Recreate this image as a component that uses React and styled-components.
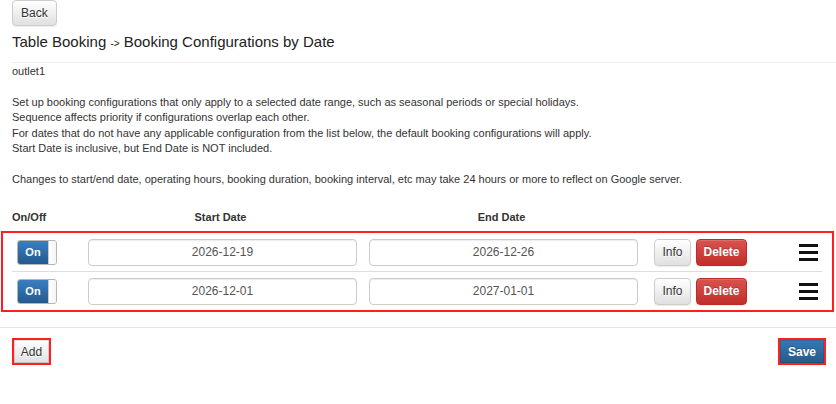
import React from 'react';
import styled, { createGlobalStyle, css } from 'styled-components';

const GlobalStyle = createGlobalStyle`
  body {
    margin: 0;
    background: #fff;
    color: #333;
    font-family: "Liberation Sans", Arial, sans-serif;
    font-size: 11px;
  }
`;

const rows = [
  { id: 1, start: '2026-12-19', end: '2026-12-26' },
  { id: 2, start: '2026-12-01', end: '2027-01-01' },
];

const App = () => (
  <Page>
    <GlobalStyle />
    <Button>Back</Button>
    <Title>
      Table Booking <Arrow>-&gt;</Arrow> Booking Configurations by Date
    </Title>
    <TopRule />
    <Intro>
      outlet1
      <br />
      <br />
      Set up booking configurations that only apply to a selected date range, such as seasonal periods or special holidays.
      <br />
      Sequence affects priority if configurations overlap each other.
      <br />
      For dates that do not have any applicable configuration from the list below, the default booking configurations will apply.
      <br />
      Start Date is inclusive, but End Date is NOT included.
      <br />
      <br />
      Changes to start/end date, operating hours, booking duration, booking interval, etc may take 24 hours or more to reflect on Google server.
    </Intro>

    <HeaderRow>
      <HeadCell>On/Off</HeadCell>
      <HeadCell $center>Start Date</HeadCell>
      <HeadCell $center>End Date</HeadCell>
    </HeaderRow>

    <RowsBox>
      {rows.map(row => (
        <Row key={row.id}>
          <Switch>
            <SwitchOn>On</SwitchOn>
            <SwitchKnob />
          </Switch>
          <DateInput readOnly value={row.start} />
          <DateInput readOnly value={row.end} $gap={12} />
          <RowActions>
            <Button $size="row" $width={37}>Info</Button>
            <Button $variant="danger" $size="row" $width={51}>Delete</Button>
          </RowActions>
          <Handle viewBox="0 0 19 17" aria-hidden="true">
            <rect x="0" y="0" width="19" height="3" />
            <rect x="0" y="7" width="19" height="3" />
            <rect x="0" y="14" width="19" height="3" />
          </Handle>
        </Row>
      ))}
    </RowsBox>

    <BottomRule />
    <Footer>
      <Button $flagged $width={39}>Add</Button>
      <Button $variant="primary" $flagged $width={48}>Save</Button>
    </Footer>
  </Page>
);

export default App;

const Page = styled.div`
  padding: 0 10px 0 12px;
`;

const variants = {
  default: css`
    color: #333;
    background: linear-gradient(to bottom, #fff 0, #e0e0e0 100%);
    border-color: #ccc;
    text-shadow: 0 1px 0 #fff;
  `,
  primary: css`
    color: #fff;
    font-weight: bold;
    background: linear-gradient(to bottom, #337ab7 0, #265a88 100%);
    border-color: #245580;
    text-shadow: 0 -1px 0 rgba(0, 0, 0, 0.2);
  `,
  danger: css`
    color: #fff;
    font-weight: bold;
    background: linear-gradient(to bottom, #d9534f 0, #c12e2a 100%);
    border-color: #b92c28;
    text-shadow: 0 -1px 0 rgba(0, 0, 0, 0.2);
  `,
};

const Button = styled.button`
  box-sizing: border-box;
  height: ${({ $size }) => ($size === 'row' ? '27px' : '26px')};
  ${({ $width }) => ($width ? `width: ${$width}px; padding: 0;` : 'padding: 0 8px;')}
  border: 1px solid;
  border-radius: 4px;
  font-family: "Liberation Sans", Arial, sans-serif;
  font-size: 12px;
  line-height: 1;
  cursor: pointer;
  box-shadow: inset 0 1px 0 rgba(255, 255, 255, 0.15), 0 1px 1px rgba(0, 0, 0, 0.075);
  ${({ $variant }) => variants[$variant || 'default']}

  ${({ $flagged }) =>
    $flagged &&
    css`
      border: 2px solid #ff1f1f;
      border-radius: 0;
      height: 27px;
      box-shadow: inset 0 0 0 1px rgba(0, 0, 0, 0.12);
    `}
`;

const Title = styled.h3`
  margin: 7px 0 0;
  font-size: 15px;
  font-weight: normal;
  line-height: 18px;
  color: #222;
`;

const Arrow = styled.span`
  font-size: 10px;
`;

const TopRule = styled.hr`
  margin: 9px -10px 0 0;
  border: 0;
  border-top: 1px solid #eee;
`;

const Intro = styled.p`
  margin: 1px 0 0;
  line-height: 15.4px;
  font-size: 11px;
`;

const HeaderRow = styled.div`
  display: grid;
  grid-template-columns: 74px 269px 281px;
  margin-top: 23px;
  line-height: 15px;
`;

const HeadCell = styled.div`
  font-weight: bold;
  text-align: ${({ $center }) => ($center ? 'center' : 'left')};

  &:last-child {
    padding-left: 12px;
  }
`;

const RowsBox = styled.div`
  margin: 6px -8px 0 -11px;
  padding: 0 10px 0 9px;
  border: 2px solid #ff1f1f;
`;

const Row = styled.div`
  display: flex;
  align-items: center;
  height: 38px;
  padding-left: 5px;

  & + & {
    border-top: 1px solid #ddd;
  }
`;

const RowActions = styled.div`
  display: flex;
  gap: 5px;
  margin-left: 16px;
`;

const Switch = styled.div`
  display: flex;
  box-sizing: border-box;
  width: 40px;
  height: 25px;
  border: 1px solid #b5b5b5;
  border-radius: 3px;
  overflow: hidden;
  flex-shrink: 0;
`;

const SwitchOn = styled.div`
  width: 30px;
  display: flex;
  align-items: center;
  justify-content: center;
  color: #fff;
  font-weight: bold;
  font-size: 11px;
  background: linear-gradient(to bottom, #3a7fc0 0, #245a8e 100%);
`;

const SwitchKnob = styled.div`
  flex: 1;
  background: linear-gradient(to right, #fff 0, #f4f4f4 100%);
  border-left: 1px solid #ccc;
`;

const DateInput = styled.input`
  box-sizing: border-box;
  width: 269px;
  height: 27px;
  margin-left: ${({ $gap }) => $gap || 31}px;
  padding: 0 8px;
  border: 1px solid #ccc;
  border-radius: 4px;
  box-shadow: inset 0 1px 1px rgba(0, 0, 0, 0.075);
  font-family: "Liberation Sans", Arial, sans-serif;
  font-size: 12px;
  color: #555;
  text-align: center;
  outline: none;
  flex-shrink: 0;
`;

const Handle = styled.svg`
  width: 19px;
  height: 17px;
  margin-left: 52px;
  fill: #111;
  flex-shrink: 0;
`;

const BottomRule = styled.hr`
  margin: 15px -10px 0 -12px;
  border: 0;
  border-top: 1px solid #e6e6e6;
`;

const Footer = styled.div`
  display: flex;
  justify-content: space-between;
  align-items: flex-start;
  margin-top: 10px;
`;
